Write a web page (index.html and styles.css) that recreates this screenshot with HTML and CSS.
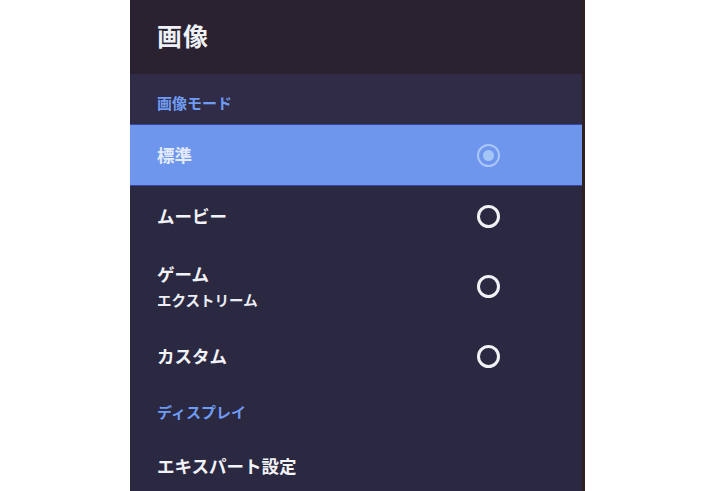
FILE: index.html
```html
<!DOCTYPE html>
<html lang="ja">
<head>
    <meta charset="UTF-8">
    <title>画像</title>
    <link rel="stylesheet" href="styles.css">
</head>
<body>
    <div class="panel">
        <div class="panel-header">
            <h1>画像</h1>
        </div>

        <div class="section-title first">画像モード</div>

        <div class="option selected">
            <div class="option-text">
                <span class="option-label">標準</span>
            </div>
            <span class="radio checked"></span>
        </div>

        <div class="option">
            <div class="option-text">
                <span class="option-label">ムービー</span>
            </div>
            <span class="radio"></span>
        </div>

        <div class="option tall">
            <div class="option-text">
                <span class="option-label">ゲーム</span>
                <span class="option-sub">エクストリーム</span>
            </div>
            <span class="radio"></span>
        </div>

        <div class="option">
            <div class="option-text">
                <span class="option-label">カスタム</span>
            </div>
            <span class="radio"></span>
        </div>

        <div class="section-title">ディスプレイ</div>

        <div class="option">
            <div class="option-text">
                <span class="option-label">エキスパート設定</span>
            </div>
        </div>
    </div>
</body>
</html>
```

FILE: styles.css
```css
body {
    margin: 0;
    padding: 0;
    background-color: #ffffff;
    font-family: "Noto Sans CJK JP", "Noto Sans", sans-serif;
    overflow: hidden;
}
.panel {
    margin-left: 130px;
    width: 452px;
    height: 491px;
    background-color: #2b2842;
    border-right: 3px solid #2e211f;
    overflow: hidden;
}
.panel-header {
    background-color: #2a2231;
    height: 74px;
    padding-left: 27px;
    display: flex;
    align-items: center;
}
.panel-header h1 {
    margin: 0;
    margin-top: -4px;
    color: #eef2f6;
    font-size: 25px;
    font-weight: 700;
    letter-spacing: 1px;
}
.section-title {
    height: 50px;
    padding-left: 27px;
    display: flex;
    align-items: center;
    color: #6f9cf2;
    font-size: 15px;
    font-weight: 700;
}
.section-title.first {
    background-color: #302c48;
    padding-top: 6px;
    height: 44px;
}
.option {
    height: 60px;
    padding-left: 27px;
    padding-right: 82px;
    display: flex;
    align-items: center;
    justify-content: space-between;
}
.option.tall {
    height: 80px;
}
.option.selected {
    height: 60px;
    background-color: #6f96ed;
    border-top: 1px solid #3a45a8;
    border-bottom: 1px solid #3a45a8;
}
.option-text {
    display: flex;
    flex-direction: column;
}
.option-label {
    color: #f2f3f7;
    font-size: 17.5px;
    font-weight: 700;
    line-height: 24px;
}
.selected .option-label {
    color: #e3ebfb;
}
.option-sub {
    color: #eceef4;
    font-size: 14.5px;
    font-weight: 700;
    line-height: 22px;
    margin-top: 3px;
}
.radio {
    width: 17px;
    height: 17px;
    border: 3px solid #f0f2f6;
    border-radius: 50%;
    box-sizing: content-box;
    position: relative;
}
.radio.checked {
    border-width: 2px;
    width: 19px;
    height: 19px;
    border-color: #a9c5f9;
}
.radio.checked::after {
    content: "";
    position: absolute;
    left: 4px;
    top: 4px;
    width: 11px;
    height: 11px;
    border-radius: 50%;
    background-color: #a3c6f7;
}
```
